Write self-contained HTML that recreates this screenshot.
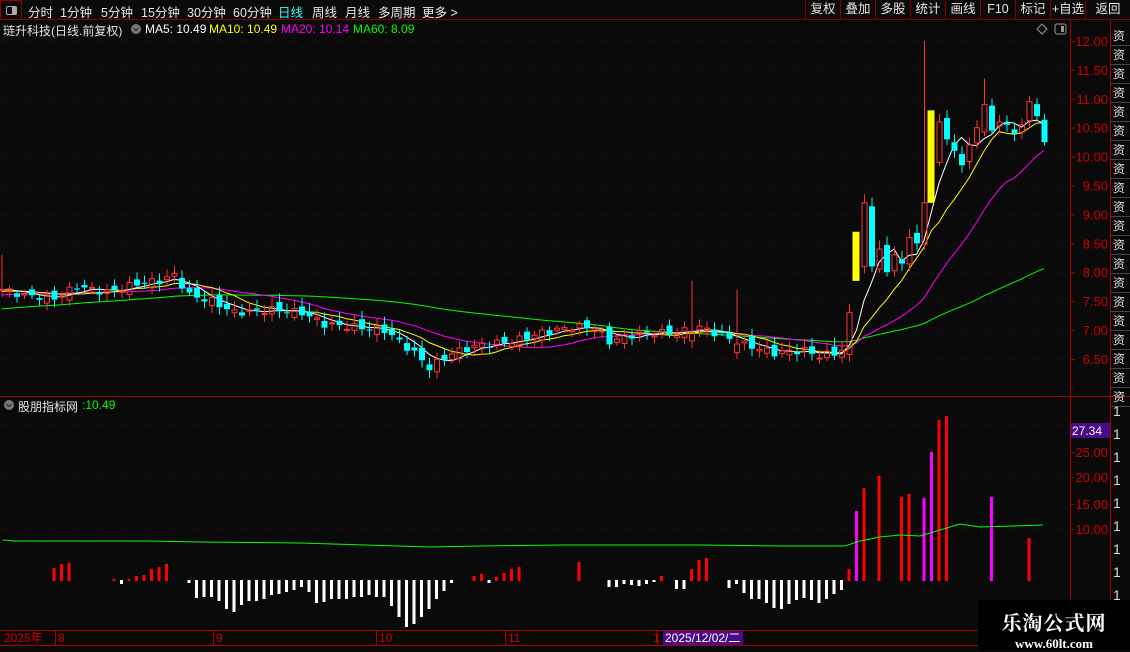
<!DOCTYPE html>
<html><head><meta charset="utf-8">
<style>
*{margin:0;padding:0;box-sizing:border-box}
body{width:1130px;height:650px;background:#0a0a0a;overflow:hidden;position:relative;font-family:"Liberation Sans","Noto Sans CJK SC",sans-serif;color:#ddd}
.tb{position:absolute;top:0;left:0;width:1130px;height:20px;background:#0a0a0a;border-bottom:1px solid #800;font-size:12.5px}
.tb span{position:absolute;top:2px;color:#e6e6e6}
.rb{position:absolute;top:0;height:20px;border-left:1px solid #800;color:#e6e6e6;font-size:12.5px;text-align:center;line-height:19px}
.ic{position:absolute;left:0;top:0;width:22px;height:20px;border:1px solid #900}
.ic i{position:absolute;left:5px;top:5px;width:11px;height:9px;border:1px solid #aaa;border-radius:2px}
.ic i:after{content:"";position:absolute;right:0;top:0;width:4px;height:7px;background:#aaa}
.t{position:absolute;font-size:12px;white-space:nowrap}
svg{position:absolute;left:0;top:0}
.wm{position:absolute;left:978px;top:600px;width:152px;height:50px;background:#000;text-align:center;font-family:"Liberation Serif","Noto Serif CJK SC",serif;font-weight:bold;color:#fff}
</style></head><body>
<div class="tb">
<div class="ic"><i></i></div>
<span style="left:28px">分时</span><span style="left:60px">1分钟</span><span style="left:101px">5分钟</span><span style="left:141px">15分钟</span><span style="left:187px">30分钟</span><span style="left:233px">60分钟</span><span style="left:278px;color:#3ff">日线</span><span style="left:312px">周线</span><span style="left:345px">月线</span><span style="left:378px">多周期</span><span style="left:422px">更多 &gt;</span>
<div class="rb" style="left:805px;width:35px">复权</div><div class="rb" style="left:840px;width:35px">叠加</div><div class="rb" style="left:875px;width:35px">多股</div><div class="rb" style="left:910px;width:35px">统计</div><div class="rb" style="left:945px;width:35px">画线</div><div class="rb" style="left:980px;width:35px">F10</div><div class="rb" style="left:1015px;width:35px">标记</div><div class="rb" style="left:1050px;width:35px">+自选</div><div class="rb" style="left:1085px;width:45px;border-right:none">返回</div>
</div>
<div class="t" style="left:3px;top:22px;color:#e6e6e6">琏升科技(日线.前复权)</div>
<div class="t" style="left:145px;top:22px;color:#fff">MA5: 10.49</div>
<div class="t" style="left:209px;top:22px;color:#ff0">MA10: 10.49</div>
<div class="t" style="left:281px;top:22px;color:#f0f">MA20: 10.14</div>
<div class="t" style="left:353px;top:22px;color:#0f0">MA60: 8.09</div>
<div class="t" style="left:18px;top:398px;color:#e6e6e6">股朋指标网</div>
<div class="t" style="left:82px;top:398px;color:#0f0">:10.49</div>
<svg id="s" width="1130" height="650"></svg>
<div class="wm"><div style="font-size:20px;margin-top:7px;letter-spacing:1px">乐淘公式网</div><div style="font-size:13px;margin-top:0px">www.60lt.com</div></div>
<script>
var S='';
function R(x,y,w,h,c){S+='<rect x="'+x+'" y="'+y+'" width="'+w+'" height="'+h+'" fill="'+c+'"/>';}
function L(x1,y1,x2,y2,c,d){S+='<line x1="'+x1+'" y1="'+y1+'" x2="'+x2+'" y2="'+y2+'" stroke="'+c+'" stroke-width="1"'+(d?' stroke-dasharray="1,5"':'')+'/>';}
function T(x,y,t,c,a,fs){S+='<text x="'+x+'" y="'+y+'" fill="'+c+'" font-size="'+(fs||12)+'" font-family="Liberation Sans,Noto Sans CJK SC,sans-serif"'+(a?' text-anchor="'+a+'"':'')+'>'+t+'</text>';}
function Y(p){return 41+(12-p)*57.8;}
for(var p=6.5;p<=12.01;p+=0.5){L(0,Y(p)+0.5,1068,Y(p)+0.5,'#5a0a0a',1);T(1108,Y(p)+5,p.toFixed(2),'#c00','end',13);L(1070,Y(p)+0.5,1075,Y(p)+0.5,'#a00');L(1070,Y(p)+29.4,1073,Y(p)+29.4,'#a00');}
[425,477,529].forEach(function(y){L(0,y+0.5,1068,y+0.5,'#5a0a0a',1)});
[[452,'25.00'],[477,'20.00'],[504,'15.00'],[529,'10.00']].forEach(function(a){T(1108,a[0]+5,a[1],'#c00','end',13);L(1070,a[0]+0.5,1074,a[0]+0.5,'#a00')});
var A=[[0,7.7],[3,7.6],[7,7.55],[10,7.75],[14,7.65],[18,7.8],[21,7.85],[23,7.95],[25,7.6],[28,7.5],[31,7.3],[36,7.35],[40,7.3],[43,7.1],[47,7.05],[51,7.0],[55,6.6],[57,6.35],[60,6.6],[64,6.75],[68,6.8],[72,6.95],[76,7.05],[79,7.05],[81,6.8],[85,6.95],[90,6.95],[93,7.05],[96,6.9],[99,6.75],[103,6.6],[107,6.65],[109,6.55],[111,6.6],[112,6.65],[113,7.3],[114,7.85],[115,9.2],[116,8.1],[117,8.4],[118,8.0],[119,8.3],[120,8.15],[121,8.6],[122,8.5],[123,9.2],[124,10.8],[125,10.6],[126,10.3],[127,10.1],[128,9.85],[129,10.2],[130,10.5],[131,10.9],[132,10.45],[133,10.6],[134,10.55],[135,10.4],[136,10.55],[137,10.95],[138,10.7],[139,10.25]];
var N=140,C=[];
for(var i=0;i<N;i++){for(var k=0;k<A.length-1;k++){if(i>=A[k][0]&&i<=A[k+1][0]){var f=(i-A[k][0])/(A[k+1][0]-A[k][0]);C[i]=A[k][1]+(A[k+1][1]-A[k][1])*f+(i<113?0.06*Math.sin(i*2.3):0);break;}}}
var X=function(i){return 1.5+7.5*i;};
function MA(n){var pts=[];for(var i=0;i<N;i++){var s=0;for(var j=i-n+1;j<=i;j++){s+=j>=0?C[j]:(7.0+0.012*(j+60));}pts.push(X(i)+','+Y(s/n).toFixed(1));}return pts.join(' ');}
[[60,'#0f0'],[20,'#f0f'],[10,'#ff0'],[5,'#fff']].forEach(function(m){S+='<polyline points="'+MA(m[0])+'" fill="none" stroke="'+m[1]+'" stroke-width="1"/>';});
for(var i=0;i<N;i++){var c=C[i],o=i>0?C[i-1]+0.08*Math.cos(i*1.7):c;if(i==115)o=8.1;if(i==125)o=9.9;if(i==92||i==98)o=c-0.15;if(i==114){R(X(i)-4,Y(8.7),7,Y(7.85)-Y(8.7),'#ff0');continue;}if(i==124){R(X(i)-4,Y(10.8),7,Y(9.2)-Y(10.8),'#ff0');continue;}
var hi=Math.max(o,c)+0.05+0.1*Math.abs(Math.sin(i*3.1)),lo=Math.min(o,c)-0.05-0.08*Math.abs(Math.cos(i*2.7));if(i==0)hi=8.3;if(i==123)hi=12.0;if(i==131)hi=11.35;if(i==92)hi=7.85;if(i==98)hi=7.7;
var up=c>=o,col=up?'#f33':'#0ff',t=Y(Math.max(o,c)),b=Y(Math.min(o,c));if(b-t<1)b=t+1;
L(X(i)+0.5,Y(hi),X(i)+0.5,t,col);L(X(i)+0.5,b,X(i)+0.5,Y(lo),col);
if(up)S+='<rect x="'+(X(i)-2)+'" y="'+t+'" width="5" height="'+(b-t)+'" fill="none" stroke="#f33" stroke-width="1"/>';else R(X(i)-2.5,t,6,b-t,'#0ff');}
var B={7:568,8:564,9:563,15:579,16:584,17:579,18:576,19:575,20:569,21:567,22:564,25:583,77:562,81:587,82:587,83:584,84:585,85:586,86:584,87:582,88:576,90:589,91:589,92:569,93:560,94:558,97:588,98:584,113:569,115:488,117:476,120:497,121:494,125:420,126:416,137:538};
var dep=[598,597,597,601,609,612,605,601,601,599,595,594,592,590,587,592,603,602,599,599,599,597,597,595,597,597,606,617,627,624,617,609,599,591,583];
for(var k=0;k<dep.length;k++)B[26+k]=dep[k];
[[63,576],[64,574],[65,583],[66,577],[67,573],[68,569],[69,567]].forEach(function(a){B[a[0]]=a[1]});
var dep2=[593,599,599,603,608,609,604,600,598,600,603,599,594,590];for(k=0;k<dep2.length;k++)B[99+k]=dep2[k];
var M={114:511,123:498,124:452,132:497};
for(var i in B){var y=B[i],x=X(+i)-1.5;if(y<580)R(x,y,3,581-y,'#f00');else R(x,580,3,y-580,'#fff');}
for(var i in M){R(X(+i)-1.5,M[i],3,581-M[i],'#f0f');}
S+='<polyline points="3,540 15,541 80,541 150,541 200,542 300,543 430,547 480,546 560,545 700,545 780,546 845,546 860,541 880,537 900,535 920,536 940,530 960,524 980,527 1043,525" fill="none" stroke="#0f0" stroke-width="1"/>';
L(0,396.5,1130,396.5,'#a00');L(1070.5,20,1070.5,650,'#a00');L(1110.5,20,1110.5,630,'#a00');
L(0,630.5,1070,630.5,'#a00');L(0,645.5,1070,645.5,'#a00');
[55,213,376,505,657].forEach(function(x){L(x+0.5,630,x+0.5,645,'#a00')});
T(4,642,'2025年','#c00');T(58,642,'8','#c00');T(216,642,'9','#c00');T(379,642,'10','#c00');T(508,642,'11','#c00');T(653,642,'1','#c00');
R(663,631,80,14,'#4a0a8a');T(665,642,'2025/12/02/二','#fff');
R(1071,423,39,15,'#4a0a8a');T(1072,435,'27.34','#fff');
for(var y=28;y<395;y+=19){T(1113,y+12,'资','#ddd');L(1110,y+17.5,1130,y+17.5,'#444');}
for(var y=400;y<620;y+=23){T(1113,y+16,'1','#ddd','',14);}
S+='<path d="M1042 24 L1047 29 L1042 34 L1037 29 Z" fill="none" stroke="#999"/>';
S+='<rect x="1055" y="24" width="11" height="10" rx="2" fill="none" stroke="#999"/><rect x="1061" y="26" width="3" height="6" fill="#999"/>';
S+='<circle cx="136" cy="29" r="5" fill="#777"/><path d="M133.5 28 L136 30.5 L138.5 28" stroke="#222" fill="none"/>';
S+='<circle cx="9" cy="405" r="5" fill="#777"/><path d="M6.5 404 L9 406.5 L11.5 404" stroke="#222" fill="none"/>';
document.getElementById('s').innerHTML=S;
</script>
</body></html>
